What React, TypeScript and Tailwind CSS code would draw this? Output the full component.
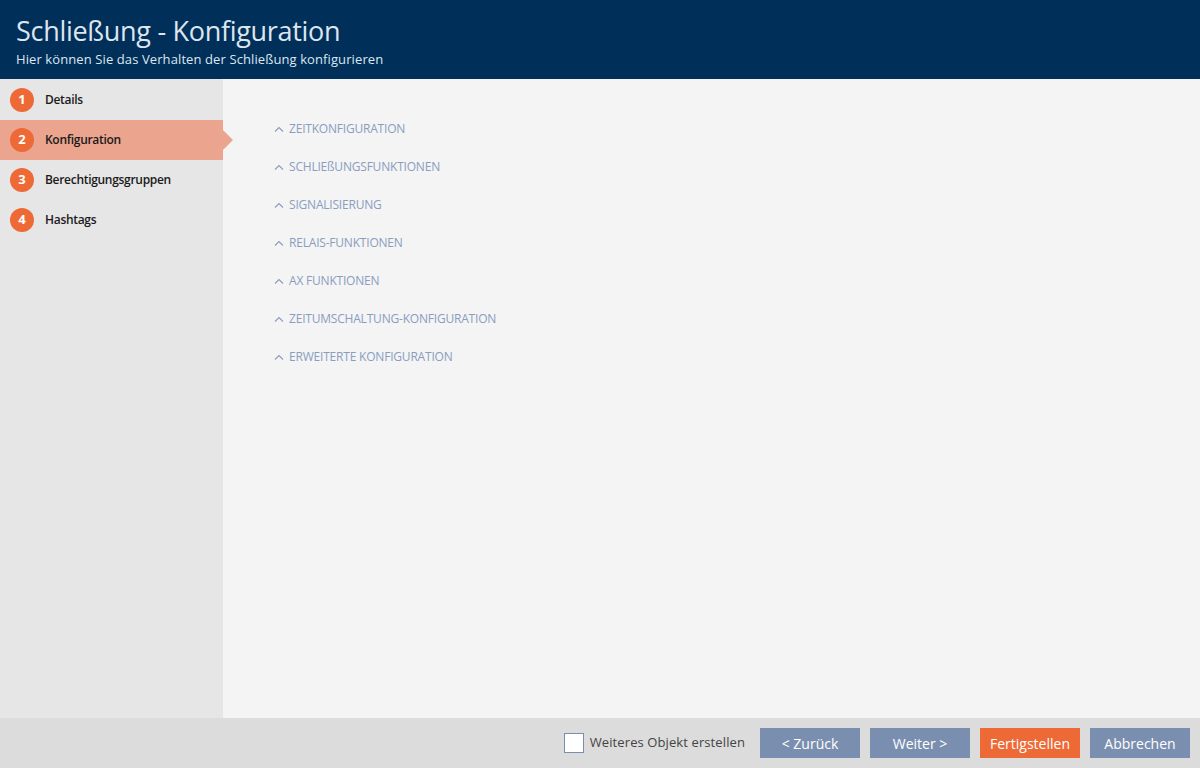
import React from "react";

const steps = [
  { n: 1, label: "Details" },
  { n: 2, label: "Konfiguration", active: true },
  { n: 3, label: "Berechtigungsgruppen" },
  { n: 4, label: "Hashtags" },
];

const sections = [
  "ZEITKONFIGURATION",
  "SCHLIEßUNGSFUNKTIONEN",
  "SIGNALISIERUNG",
  "RELAIS-FUNKTIONEN",
  "AX FUNKTIONEN",
  "ZEITUMSCHALTUNG-KONFIGURATION",
  "ERWEITERTE KONFIGURATION",
];

function Chevron() {
  return (
    <svg width="10" height="6" viewBox="0 0 10 6" className="shrink-0">
      <path d="M1 5.5 L5 1.5 L9 5.5" fill="none" stroke="currentColor" strokeWidth="1.1" />
    </svg>
  );
}

export default function App() {
  return (
    <div
      className="w-[1200px] h-[768px] flex flex-col bg-[#f4f4f4] overflow-hidden"
      style={{ fontFamily: '"Open Sans", "Noto Sans", sans-serif' }}
    >
      <header className="h-[79px] shrink-0 bg-[#002f5a] px-4 pt-[14px] text-[#dde6ef]">
        <h1 className="text-[27px] leading-[34px] font-normal tracking-[-0.3px]">Schließung - Konfiguration</h1>
        <p className="text-[13px] leading-[18px] mt-[2px] tracking-[0.1px]">Hier können Sie das Verhalten der Schließung konfigurieren</p>
      </header>

      <div className="flex flex-1 min-h-0">
        <aside className="relative z-10 w-[223px] shrink-0 bg-[#e6e6e6] pt-px">
          {steps.map((s) => (
            <div
              key={s.n}
              className={`relative h-10 flex items-center pl-[10px] gap-[11px] ${s.active ? "bg-[#eba58e]" : ""}`}
            >
              <span className="w-6 h-6 rounded-full bg-[#ed6a37] text-white text-[13px] font-bold flex items-center justify-center">
                {s.n}
              </span>
              <span className="text-[12px] font-semibold tracking-[-0.3px] text-[#1a1a1a]">{s.label}</span>
              {s.active && (
                <span className="absolute right-[-10px] top-1/2 -translate-y-1/2 w-0 h-0 border-y-[10px] border-y-transparent border-l-[10px] border-l-[#eba58e]" />
              )}
            </div>
          ))}
        </aside>

        <main className="flex-1 pl-[51px] pt-[41px]">
          <div className="flex flex-col gap-[20px]">
            {sections.map((t) => (
              <div key={t} className="h-[18px] flex items-center gap-[5px] text-[#8a9dbf]">
                <Chevron />
                <span className="text-[12px] tracking-[-0.2px]">{t}</span>
              </div>
            ))}
          </div>
        </main>
      </div>

      <footer className="h-[50px] shrink-0 bg-[#dcdcdc] flex items-center justify-end pr-[10px] gap-[10px]">
        <label className="flex items-center gap-[6px] mr-[5px]">
          <span className="w-5 h-5 bg-white border border-[#7a8fb0]" />
          <span className="text-[13px] tracking-[0.1px] text-[#444]">Weiteres Objekt erstellen</span>
        </label>
        <button className="w-[100px] h-[30px] bg-[#7a8fb0] text-white text-[14px]">&lt; Zurück</button>
        <button className="w-[100px] h-[30px] bg-[#7a8fb0] text-white text-[14px]">Weiter &gt;</button>
        <button className="w-[100px] h-[30px] bg-[#ed6a37] text-white text-[14px]">Fertigstellen</button>
        <button className="w-[100px] h-[30px] bg-[#7a8fb0] text-white text-[14px]">Abbrechen</button>
      </footer>
    </div>
  );
}
